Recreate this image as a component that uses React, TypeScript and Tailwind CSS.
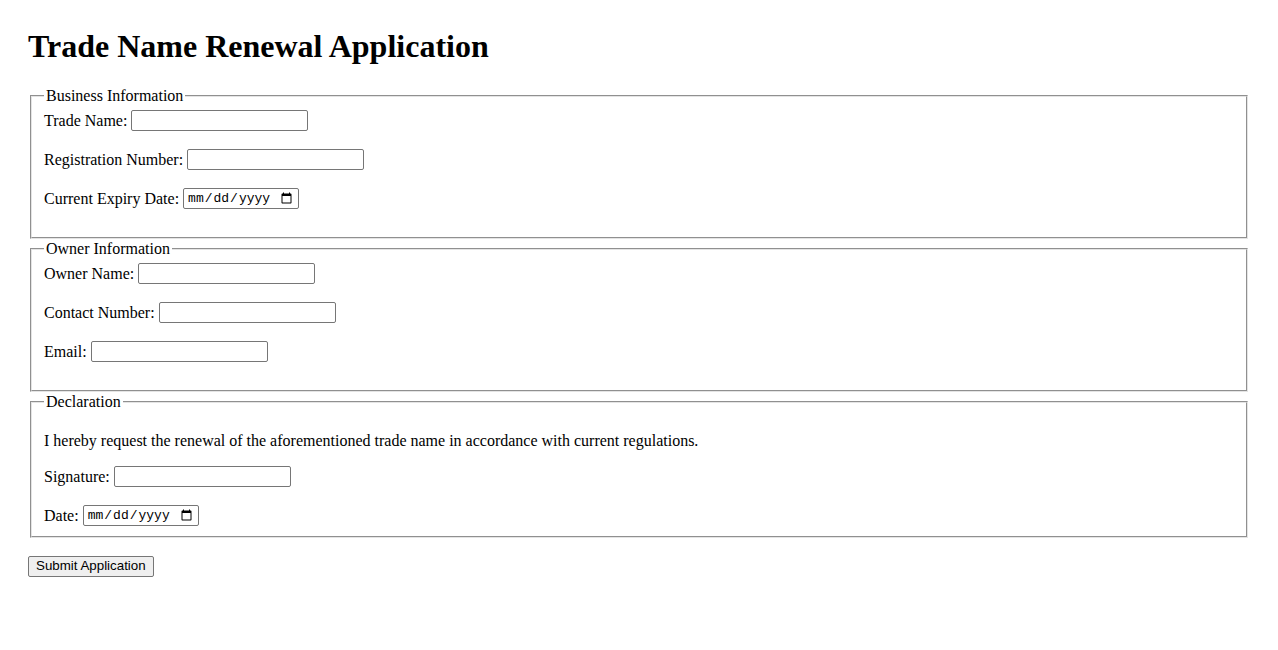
const serif = { fontFamily: '"Liberation Serif", "Times New Roman", serif' };

const Field = ({ label, type = "text", last = false }: { label: string; type?: string; last?: boolean }) => (
  <div className={`flex h-[21px] items-center gap-[4px] ${last ? "" : "mb-[18px]"}`}>
    <label className="text-[16px] leading-[normal] text-black">{label}</label>
    {type === "date" ? (
      <input
        type="date"
        className="h-[21px] w-[116px] rounded-[2px] border border-[#767676] bg-white px-[3px] text-[13px] font-['Liberation_Mono',monospace] text-black"
      />
    ) : (
      <input
        type={type}
        className="h-[21px] w-[177px] rounded-[2px] border border-[#767676] bg-white px-[2px] text-[13px]"
      />
    )}
  </div>
);

const Section = ({ legend, children }: { legend: string; children: React.ReactNode }) => (
  <fieldset className="mx-[2px] border-2 border-[#e4e4e4] [border-style:groove] px-[12px] pt-[4px] pb-[10px]">
    <legend className="px-[2px] text-[16px] leading-[20px] text-black">{legend}</legend>
    {children}
  </fieldset>
);

const App = () => {
  return (
    <div className="min-h-[650px] bg-white p-[28px] text-black" style={serif}>
      <h1 className="mb-[21.44px] text-[32px] font-bold leading-[normal]">Trade Name Renewal Application</h1>

      <form>
        <Section legend="Business Information">
          <Field label="Trade Name:" />
          <Field label="Registration Number:" />
          <Field label="Current Expiry Date:" type="date" />
        </Section>

        <Section legend="Owner Information">
          <Field label="Owner Name:" />
          <Field label="Contact Number:" />
          <Field label="Email:" type="email" />
        </Section>

        <Section legend="Declaration">
          <p className="my-4 text-[16px] leading-[normal]">
            I hereby request the renewal of the aforementioned trade name in accordance with current regulations.
          </p>
          <Field label="Signature:" />
          <Field label="Date:" type="date" last />
        </Section>

        <div className="mt-[15px]">
          <button
            type="submit"
            className="h-[21px] rounded-[2px] border border-[#767676] bg-[#efefef] px-[7px] text-[13.33px] leading-none text-black"
            style={{ fontFamily: '"Liberation Sans", Arial, sans-serif' }}
          >
            Submit Application
          </button>
        </div>
      </form>
    </div>
  );
};

export default App;
